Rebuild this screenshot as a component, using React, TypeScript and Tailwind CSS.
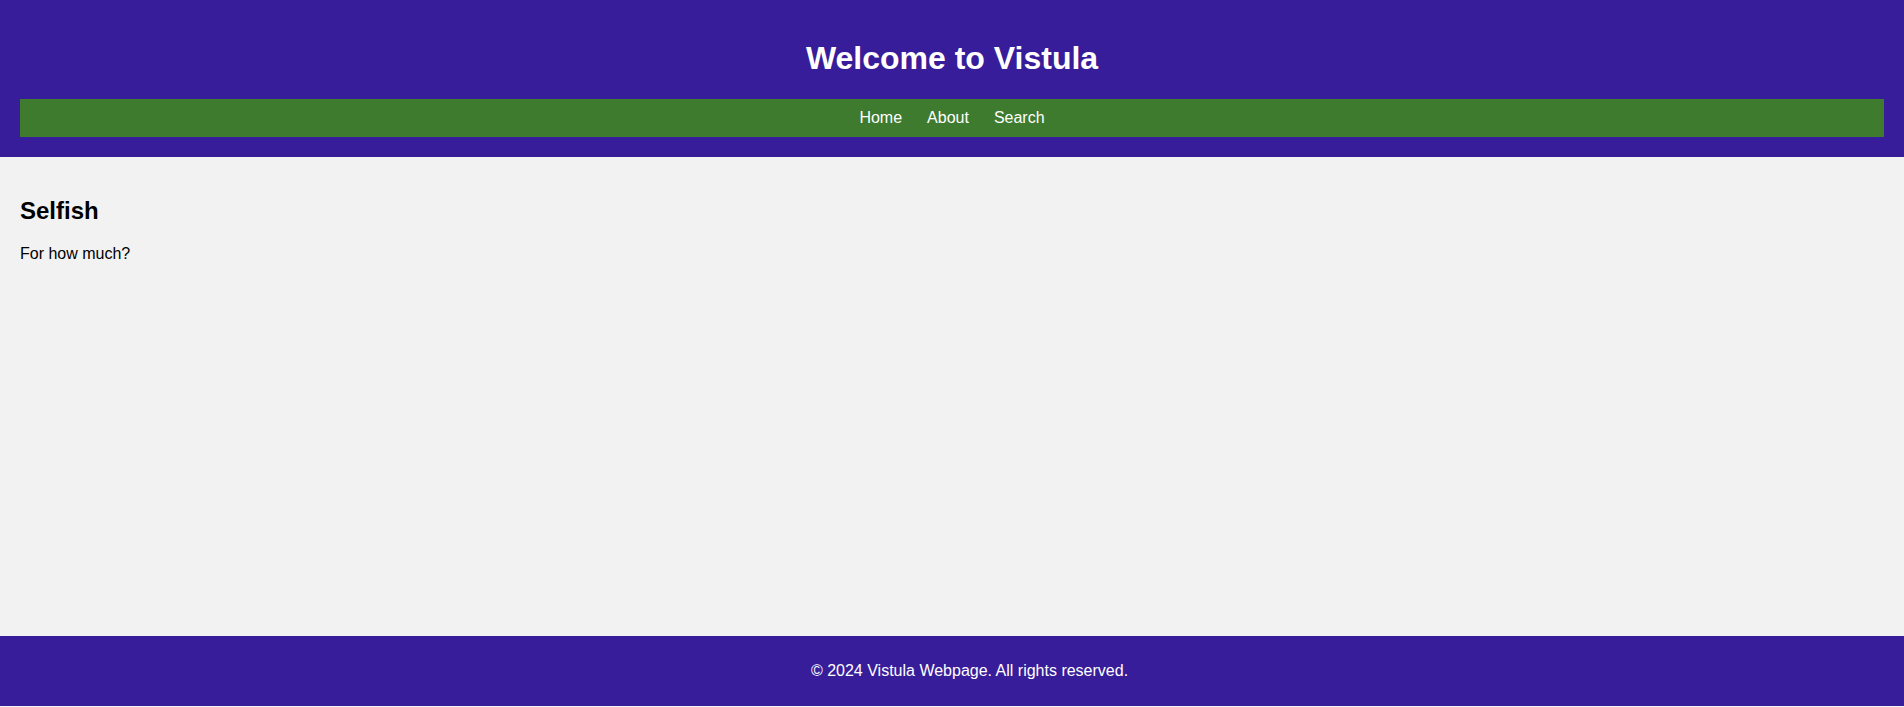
export default function App() {
  return (
    <div className="min-h-[707px] flex flex-col bg-[#f2f2f2] text-black" style={{ fontFamily: '"Liberation Sans", Arial, sans-serif' }}>
      <header className="bg-[#371d99] text-white p-5 text-center">
        <h1 className="text-[32px] leading-[36px] font-bold mt-[20px] mb-[23px]">Welcome to Vistula</h1>
        <nav className="bg-[#3e7b2f] py-[10px] text-base leading-[18px] flex justify-center gap-[25px]">
          <a href="#" className="text-white">Home</a>
          <a href="#" className="text-white">About</a>
          <a href="#" className="text-white">Search</a>
        </nav>
      </header>
      <main className="min-h-[479px] p-5">
        <h2 className="text-2xl leading-[27.6px] font-bold mt-[20px] mb-[20px]">Selfish</h2>
        <p className="text-base leading-[18.4px]">For how much?</p>
      </main>
      <footer className="bg-[#371d99] text-white text-center py-[10px] pl-[35px]">
        <p className="text-base leading-[18.4px] my-4">© 2024 Vistula Webpage. All rights reserved.</p>
      </footer>
    </div>
  );
}
